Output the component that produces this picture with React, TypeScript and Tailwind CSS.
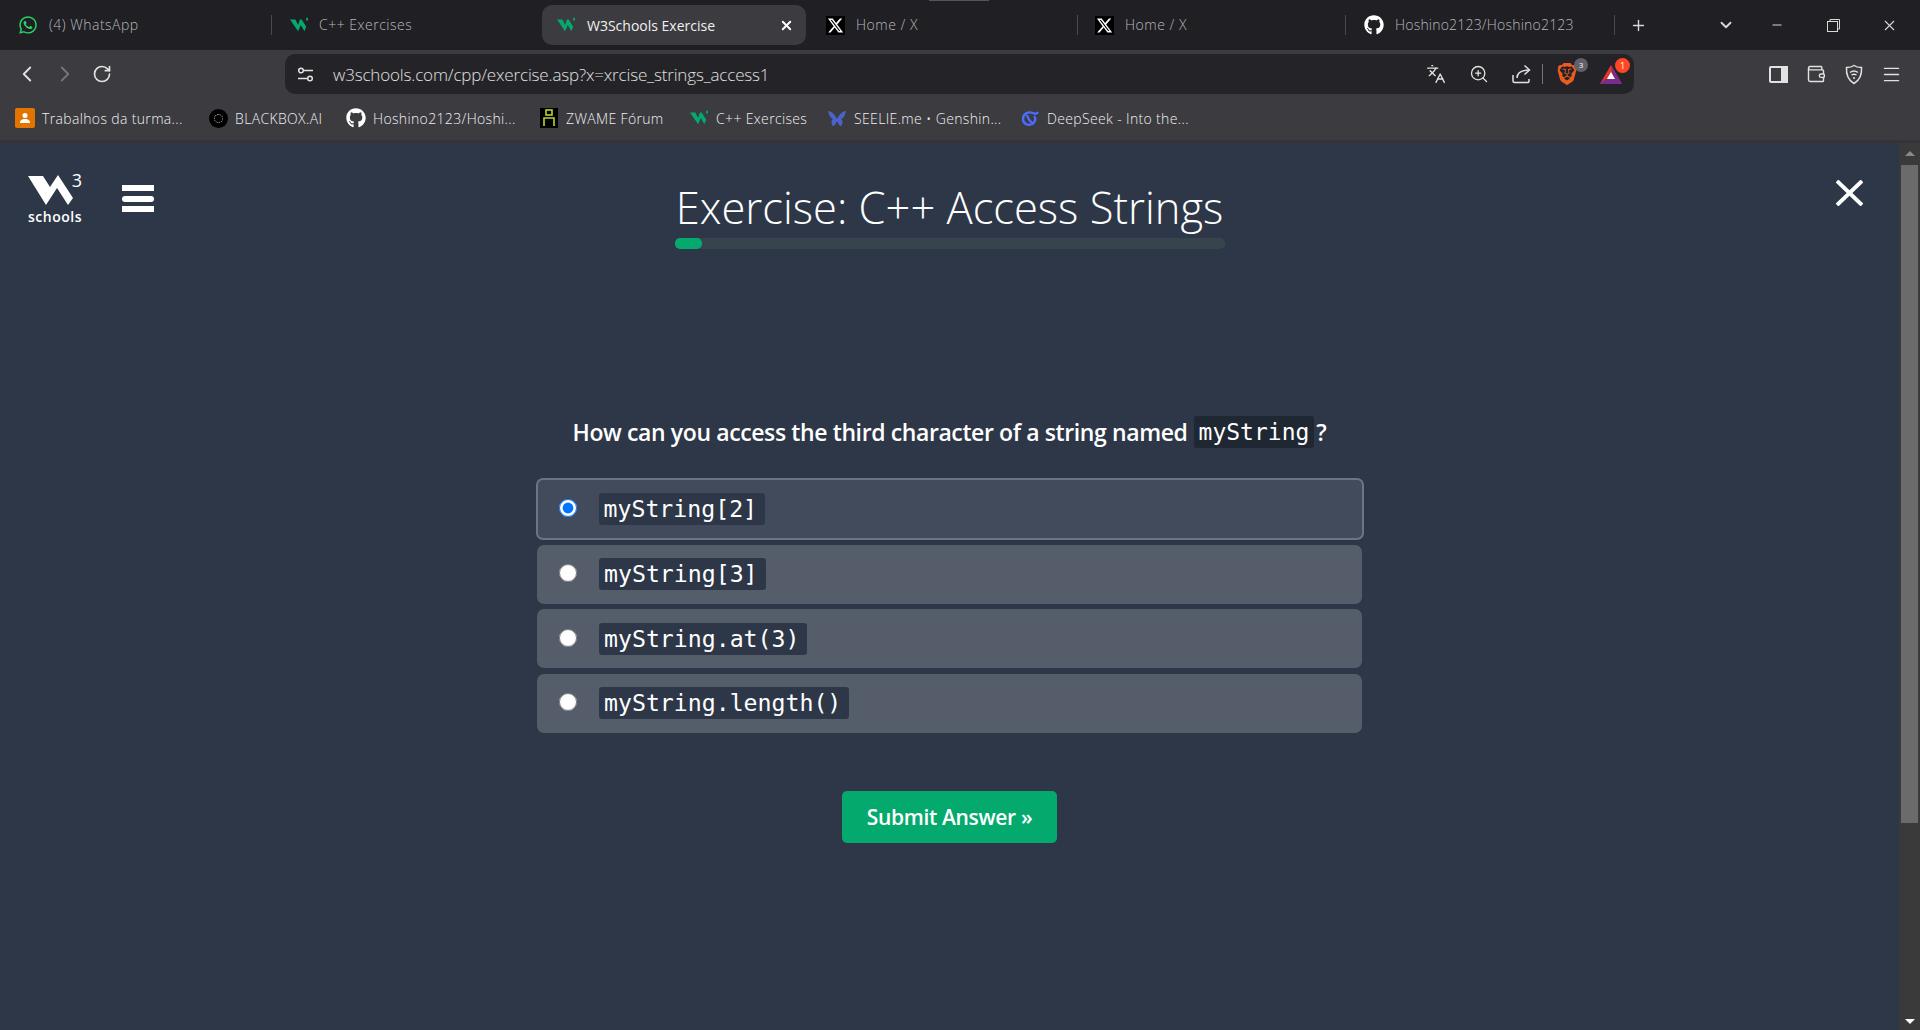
import { ChevronDown, ChevronLeft, ChevronRight, Languages, Menu, Minus, Plus, RotateCw, Wallet, X, ZoomIn } from "lucide-react";
import { FaGithub, FaWhatsapp, FaXTwitter } from "react-icons/fa6";
import { SiBrave } from "react-icons/si";

const UI_FONT = "font-['Open_Sans',sans-serif]";

function W3Favicon({ size = 18 }: { size?: number }) {
  return (
    <svg width={size} height={size} viewBox="0 0 20 20" className="shrink-0">
      <path d="M0 4h6l3 6 2-6h2l5 8-2 5-4-7-3 7z" fill="#04aa6d" />
      <path d="M18 2h2v3h-2z" fill="#04aa6d" />
    </svg>
  );
}

function XFavicon() {
  return (
    <span className="flex h-[19px] w-[19px] shrink-0 items-center justify-center bg-black">
      <FaXTwitter className="text-white" size={17} />
    </span>
  );
}

function Tab({ width, icon, label, active, sep, pad, track }: { width: number; icon: React.ReactNode; label: string; active?: boolean; sep?: boolean; pad?: string; track?: string }) {
  return (
    <div
      className={
        active
          ? "relative mt-[5px] flex h-[40px] shrink-0 items-center gap-[12px] rounded-[10px] bg-[#3b3b40] pl-[15px] text-[#f1f1f1]"
          : `relative flex h-[40px] shrink-0 items-center gap-[11px] ${pad ?? "pl-[18px]"} text-[#b8b8ba]`
      }
      style={{ width }}
    >
      {icon}
      <span className={active ? "whitespace-nowrap text-[14px]" : `-mt-[1px] whitespace-nowrap text-[14px] font-light ${track ?? "tracking-[0.5px]"}`}>{label}</span>
      {active && <X className="absolute right-[12px] text-white" size={15} strokeWidth={3} />}
      {sep && <span className="absolute right-0 h-[20px] w-px bg-[#4a4a4e]" />}
    </div>
  );
}

function Bookmark({ icon, label, width }: { icon: React.ReactNode; label: string; width: number }) {
  return (
    <div className="flex shrink-0 items-center" style={{ width }}>
      <span className="flex w-[20px] shrink-0 justify-center">{icon}</span>
      <span className="ml-[7px] whitespace-nowrap text-[14px] font-light tracking-[0.35px] text-[#f0f0f0]">{label}</span>
    </div>
  );
}

function Option({ code, checked }: { code: string; checked?: boolean }) {
  return (
    <label
      className={
        checked
          ? "-mb-[1px] flex h-[62px] w-[828px] items-center rounded-[7px] border-2 border-[#6b7585] bg-[#414b5c] pl-[21px]"
          : "flex h-[59px] w-[825px] items-center rounded-[7px] bg-[#555d6b] pl-[22px]"
      }
    >
      <input type="radio" name="answer" defaultChecked={checked} className="mb-[2px] h-[18px] w-[18px] accent-[#0075ff]" />
      <code className="ml-[22px] flex h-[32px] items-center rounded-[3px] bg-[#2d3748] pl-[5px] pr-[8px] pt-[1px] font-['DejaVu_Sans_Mono',monospace] text-[23.2px] text-white">
        {code}
      </code>
    </label>
  );
}

export default function App() {
  return (
    <div className={`flex h-[1030px] w-[1920px] flex-col overflow-hidden bg-[#2d3748] ${UI_FONT}`}>
      {/* tab strip */}
      <div className="relative flex h-[50px] shrink-0 items-start bg-[#1f1f24] pt-0">
        <span className="absolute left-[929px] top-0 h-px w-[60px] bg-[#55555a]" />
        <div className="mt-[5px] flex">
          <Tab width={272} sep icon={<FaWhatsapp className="text-[#25d366]" size={20} />} label="(4) WhatsApp" />
          <Tab width={270} icon={<W3Favicon />} label="C++ Exercises" />
        </div>
        <Tab width={264} active icon={<W3Favicon />} label="W3Schools Exercise" />
        <div className="mt-[5px] flex">
          <Tab width={272} sep pad="pl-[20px]" icon={<XFavicon />} label="Home / X" />
          <Tab width={268} sep pad="pl-[17px]" icon={<XFavicon />} label="Home / X" />
          <Tab width={269} sep track="tracking-[0.2px]" icon={<FaGithub className="text-white" size={20} />} label="Hoshino2123/Hoshino2123" />
        </div>
        <div className="mt-[5px] flex h-[40px] items-center text-[#d8d8d8]">
          <Plus size={17} className="ml-[15px]" />
          <ChevronDown size={18} className="ml-[70px]" strokeWidth={2.5} />
          <Minus size={14} className="ml-[35px]" />
          <svg width="15" height="15" viewBox="0 0 15 15" className="ml-[42px]" fill="none" stroke="currentColor">
            <rect x="1.5" y="3.5" width="10" height="10" />
            <path d="M4 3V1.5h9.5V11H12" />
          </svg>
          <X size={17} strokeWidth={1.5} className="ml-[40px]" />
        </div>
      </div>

      {/* toolbar */}
      <div className="flex h-[48px] shrink-0 items-center bg-[#3b3b40] text-[#e2e2e2]">
        <ChevronLeft size={26} strokeWidth={1.7} className="ml-[14px]" />
        <ChevronRight size={26} strokeWidth={1.7} className="ml-[12px] text-[#77777b]" />
        <RotateCw size={20} strokeWidth={2} className="ml-[14px]" />
        <div className="ml-[173px] flex h-[40px] w-[1349px] items-center rounded-[10px] bg-[#242428] pl-[12px] pr-[11px]">
          <svg width="17" height="17" viewBox="0 0 17 17" fill="none" stroke="currentColor" strokeWidth="1.5" className="shrink-0">
            <circle cx="4" cy="4.500" r="2.300" />
            <path d="M7 4.500h9M1 12.500h9" />
            <circle cx="13" cy="12.500" r="2.300" />
          </svg>
          <span className="ml-[19px] pt-[1px] text-[17px] font-light tracking-[-0.16px] text-[#e0e0e0]">w3schools.com/cpp/exercise.asp?x=xrcise_strings_access1</span>
          <div className="ml-auto flex items-center">
            <Languages size={20} strokeWidth={1.6} />
            <ZoomIn size={20} strokeWidth={1.6} className="ml-[23px]" />
            <svg width="20" height="20" viewBox="0 0 20 20" fill="none" stroke="currentColor" strokeWidth="1.5" className="ml-[22px]">
              <path d="M2 11v6c0 1 .5 1.500 1.500 1.500H17c.8 0 1-.5 1-1.500v-2" />
              <path d="M6 14c0-5 4-8 12-8" />
              <path d="M13.500 1.500 18.500 6l-5 4.500" />
            </svg>
            <span className="ml-[11px] h-[20px] w-px bg-[#77777b]" />
            <span className="relative ml-[13px]">
              <SiBrave size={22} className="text-[#ef5a1f]" />
              <span className="absolute -right-[10px] -top-[5px] flex h-[14px] w-[14px] items-center justify-center rounded-full bg-[#5f6068] text-[8px] text-white">3</span>
            </span>
            <span className="relative ml-[21px]">
              <svg width="24" height="22" viewBox="0 0 24 22">
                <path d="M12 2 23 21H1z" fill="#e5362c" />
                <path d="M12 2 23 21H15z" fill="#7a2c8c" />
                <path d="M1 21h22l-5-5H6z" fill="#7a2c8c" />
                <path d="M12 9l4 7H8z" fill="#fff" />
              </svg>
              <span className="absolute -right-[7px] -top-[5px] flex h-[15px] w-[15px] items-center justify-center rounded-full bg-[#ff4724] text-[9px] text-white">1</span>
            </span>
          </div>
        </div>
        <svg width="21" height="21" viewBox="0 0 21 21" className="ml-[134px]" fill="none" stroke="currentColor" strokeWidth="2">
          <rect x="2" y="3" width="17" height="15" rx="1" />
          <path d="M14 3h5v15h-5z" fill="currentColor" />
        </svg>
        <Wallet size={20} strokeWidth={1.7} className="ml-[17px]" />
        <svg width="20" height="21" viewBox="0 0 20 21" fill="none" stroke="currentColor" strokeWidth="1.5" className="ml-[18px]">
          <path d="M10 1.500c2 1.500 4.500 2 7.500 2 .5 7-1.500 12.500-7.500 16-6-3.500-8-9-7.500-16 3 0 5.500-.5 7.500-2z" />
          <path d="M6 8.500c2.500-2 5.500-2 8 0M7.500 11c1.500-1 3.500-1 5 0" />
          <circle cx="10" cy="14" r="1" fill="currentColor" stroke="none" />
        </svg>
        <Menu size={21} className="ml-[17px]" strokeWidth={1.7} />
      </div>

      {/* bookmarks */}
      <div className="flex h-[45px] shrink-0 items-center border-b-[3px] border-[#333338] bg-[#3b3b40] pb-[2px] pl-[15px]">
        <Bookmark
          width={193}
          label="Trabalhos da turma..."
          icon={
            <span className="flex h-[20px] w-[20px] items-center justify-center rounded-[2px] bg-[#e37400]">
              <svg width="12" height="12" viewBox="0 0 12 12" fill="#fff">
                <circle cx="6" cy="3.500" r="2.500" />
                <path d="M1 11c0-3 2-4 5-4s5 1 5 4z" />
              </svg>
            </span>
          }
        />
        <Bookmark
          width={138}
          label="BLACKBOX.AI"
          icon={
            <span className="flex h-[19px] w-[19px] items-center justify-center rounded-full bg-black">
              <span className="h-[9px] w-[9px] rounded-full border border-dotted border-[#bbbbbb]" />
            </span>
          }
        />
        <Bookmark width={193} label="Hoshino2123/Hoshi..." icon={<FaGithub className="text-white" size={20} />} />
        <Bookmark
          width={150}
          label="ZWAME Fórum"
          icon={
            <span className="flex h-[20px] w-[18px] items-center justify-center bg-black">
              <svg width="12" height="18" viewBox="0 0 12 18" fill="none" stroke="#b6d334" strokeWidth="1.6">
                <rect x="3" y="1" width="6" height="5" />
                <path d="M1 17V9h10v8" />
              </svg>
            </span>
          }
        />
        <Bookmark width={138} label="C++ Exercises" icon={<W3Favicon />} />
        <Bookmark
          width={193}
          label="SEELIE.me • Genshin..."
          icon={
            <svg width="20" height="20" viewBox="0 0 20 20" fill="#4a63c8">
              <path d="M1 3c4 0 7 4 9 8 2-4 5-8 9-8-1 4-2 7-5 8 2 1 2 5 0 7-2 0-3-3-4-5-1 2-2 5-4 5-2-2-2-6 0-7-3-1-4-4-5-8z" />
            </svg>
          }
        />
        <Bookmark
          width={170}
          label="DeepSeek - Into the..."
          icon={
            <svg width="20" height="20" viewBox="0 0 20 20" fill="none" stroke="#4d6bfe" strokeWidth="2.400">
              <path d="M18 4c-1 2-3 2-5 1C8 3 3 6 3 11s5 7 9 5 4-6 2-8" />
              <path d="M7 7c1 4 3 7 7 9" />
            </svg>
          }
        />
      </div>

      {/* page */}
      <div className="flex min-h-0 flex-1">
        <main className="min-w-0 flex-1">
          <div className="grid grid-cols-[1fr_auto_1fr]">
            <div className="flex items-start pl-[28px] pt-[29px]">
              <div className="relative flex w-[54px] flex-col text-white">
                <svg width="46" height="34" viewBox="0 0 46 34" fill="#fff">
                  <path d="M0 4h15l7 11 8-12 15 23-5 7-11-17-11 17z" />
                </svg>
                <span className="absolute right-0 top-0 text-[18px] leading-[16px]">3</span>
                <span className="mt-[3px] text-center text-[14px] font-semibold leading-[16px] tracking-[0.5px]">schools</span>
              </div>
              <div className="ml-[40px] mt-[13px] flex w-[32px] flex-col gap-[4.5px]">
                <span className="h-[6px] bg-white" />
                <span className="h-[6px] rounded-[3px] bg-white" />
                <span className="h-[6px] bg-white" />
              </div>
            </div>
            <div className="flex w-[550px] flex-col items-center pt-[35px]">
              <h1 className="whitespace-nowrap text-[43.5px] font-light leading-[60px] text-white">Exercise: C++ Access Strings</h1>
              <div className="h-[11px] w-full rounded-[5px] bg-[#38444d]">
                <div className="h-full w-[27px] rounded-[5px] bg-[#04aa6d]" />
              </div>
            </div>
            <div className="flex justify-end pr-[36px] pt-[37px]">
              <svg width="27" height="26" viewBox="0 0 27 26" stroke="#fff" strokeWidth="4">
                <path d="M1 1l25 24M26 1 1 25" />
              </svg>
            </div>
          </div>

          <div className="mt-[160px] flex flex-col items-center">
            <p className="flex h-[46px] items-center text-[23px] font-semibold tracking-[-0.39px] text-white">
              How can you access the third character of a string named
              <code className="ml-[6px] mr-[2px] flex h-[32px] items-center rounded-[3px] bg-[#1f2733] px-[5px] font-['DejaVu_Sans_Mono',monospace] text-[23px] font-normal tracking-normal">
                myString
              </code>
              ?
            </p>
            <div className="mt-[23px] flex flex-col items-center gap-[5.5px]">
              <Option code="myString[2]" checked />
              <Option code="myString[3]" />
              <Option code="myString.at(3)" />
              <Option code="myString.length()" />
            </div>
            <button className="mt-[58px] h-[52px] w-[215px] rounded-[5px] bg-[#04aa6d] pt-[2px] text-[21px] font-semibold tracking-[-0.33px] text-white">
              Submit Answer »
            </button>
          </div>
        </main>

        {/* scrollbar */}
        <div className="flex w-[21px] shrink-0 flex-col items-center bg-[#3a3a3a]">
          <span className="mt-[8px] h-0 w-0 border-x-[5px] border-b-[5px] border-x-transparent border-b-[#8a8a8a]" />
          <span className="mt-[9px] h-[658px] w-[17px] bg-[#6b6b6b]" />
          <span className="mb-[6px] mt-auto h-0 w-0 border-x-[5px] border-t-[5px] border-x-transparent border-t-white" />
        </div>
      </div>
    </div>
  );
}
